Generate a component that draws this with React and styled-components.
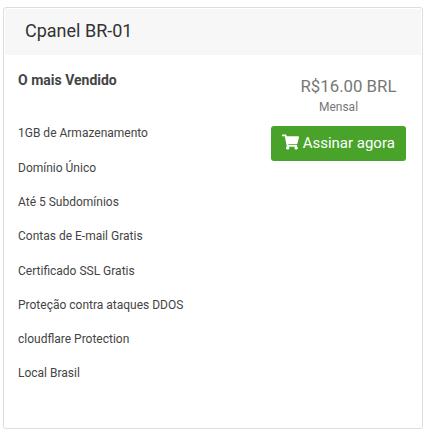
import React from "react";
import styled, { createGlobalStyle } from "styled-components";
import { FaShoppingCart } from "react-icons/fa";

const Global = createGlobalStyle`
  *{box-sizing:border-box}
  body{margin:0;background:#fff;font-family:Roboto,sans-serif;color:#444;}
  #root{display:flow-root}
`;
const Card = styled.article`
  margin:7px 0 0 3px;width:420px;height:422px;padding:1px;border:1px solid #ddd;border-radius:3px;background:#fff;
`;
const Header = styled.header`
  height:46px;padding:0 20px;background:#f7f7f7;color:#333;font-size:18px;line-height:44px;
`;
const Body = styled.div`
  display:flex;justify-content:space-between;padding:15px 15px 0 13px;
`;
const Details = styled.div`
  font-size:12px;line-height:17.14px;
`;
const Lead = styled.h2`
  margin:0 0 35.47px;font-size:14px;line-height:20px;font-weight:700;
`;
const Feature = styled.p`
  margin:0 0 17.15px;
`;
const Order = styled.aside`
  width:135px;padding-top:6px;display:flex;flex-direction:column;align-items:center;color:#777;
`;
const Price = styled.span`
  margin-left:20px;font-size:16.8px;line-height:20px;white-space:nowrap;
`;
const Cycle = styled.span`
  margin-top:1px;font-size:12px;line-height:20px;
`;
const Button = styled.button`
  display:flex;align-items:center;justify-content:center;gap:3.5px;width:135px;height:35px;margin-top:9px;padding:0 0 1px;border:0;border-radius:3px;background:#49a32b;color:#fff;font:15px Roboto,sans-serif;white-space:nowrap;
`;
const CartIcon = styled(FaShoppingCart)`
  width:17px;height:16px;margin-bottom:2px;
`;
const features = ["1GB de Armazenamento","Domínio Único","Até 5 Subdomínios","Contas de E-mail Gratis","Certificado SSL Gratis","Proteção contra ataques DDOS","cloudflare Protection","Local Brasil"];

export default function App() {
  return (
    <>
      <Global />
      <Card>
        <Header>Cpanel BR-01</Header>
        <Body>
          <Details>
            <Lead>O mais Vendido</Lead>
            {features.map((f) => <Feature key={f}>{f}</Feature>)}
          </Details>
          <Order>
            <Price>R$16.00 BRL</Price>
            <Cycle>Mensal</Cycle>
            <Button><CartIcon />Assinar agora</Button>
          </Order>
        </Body>
      </Card>
    </>
  );
}
